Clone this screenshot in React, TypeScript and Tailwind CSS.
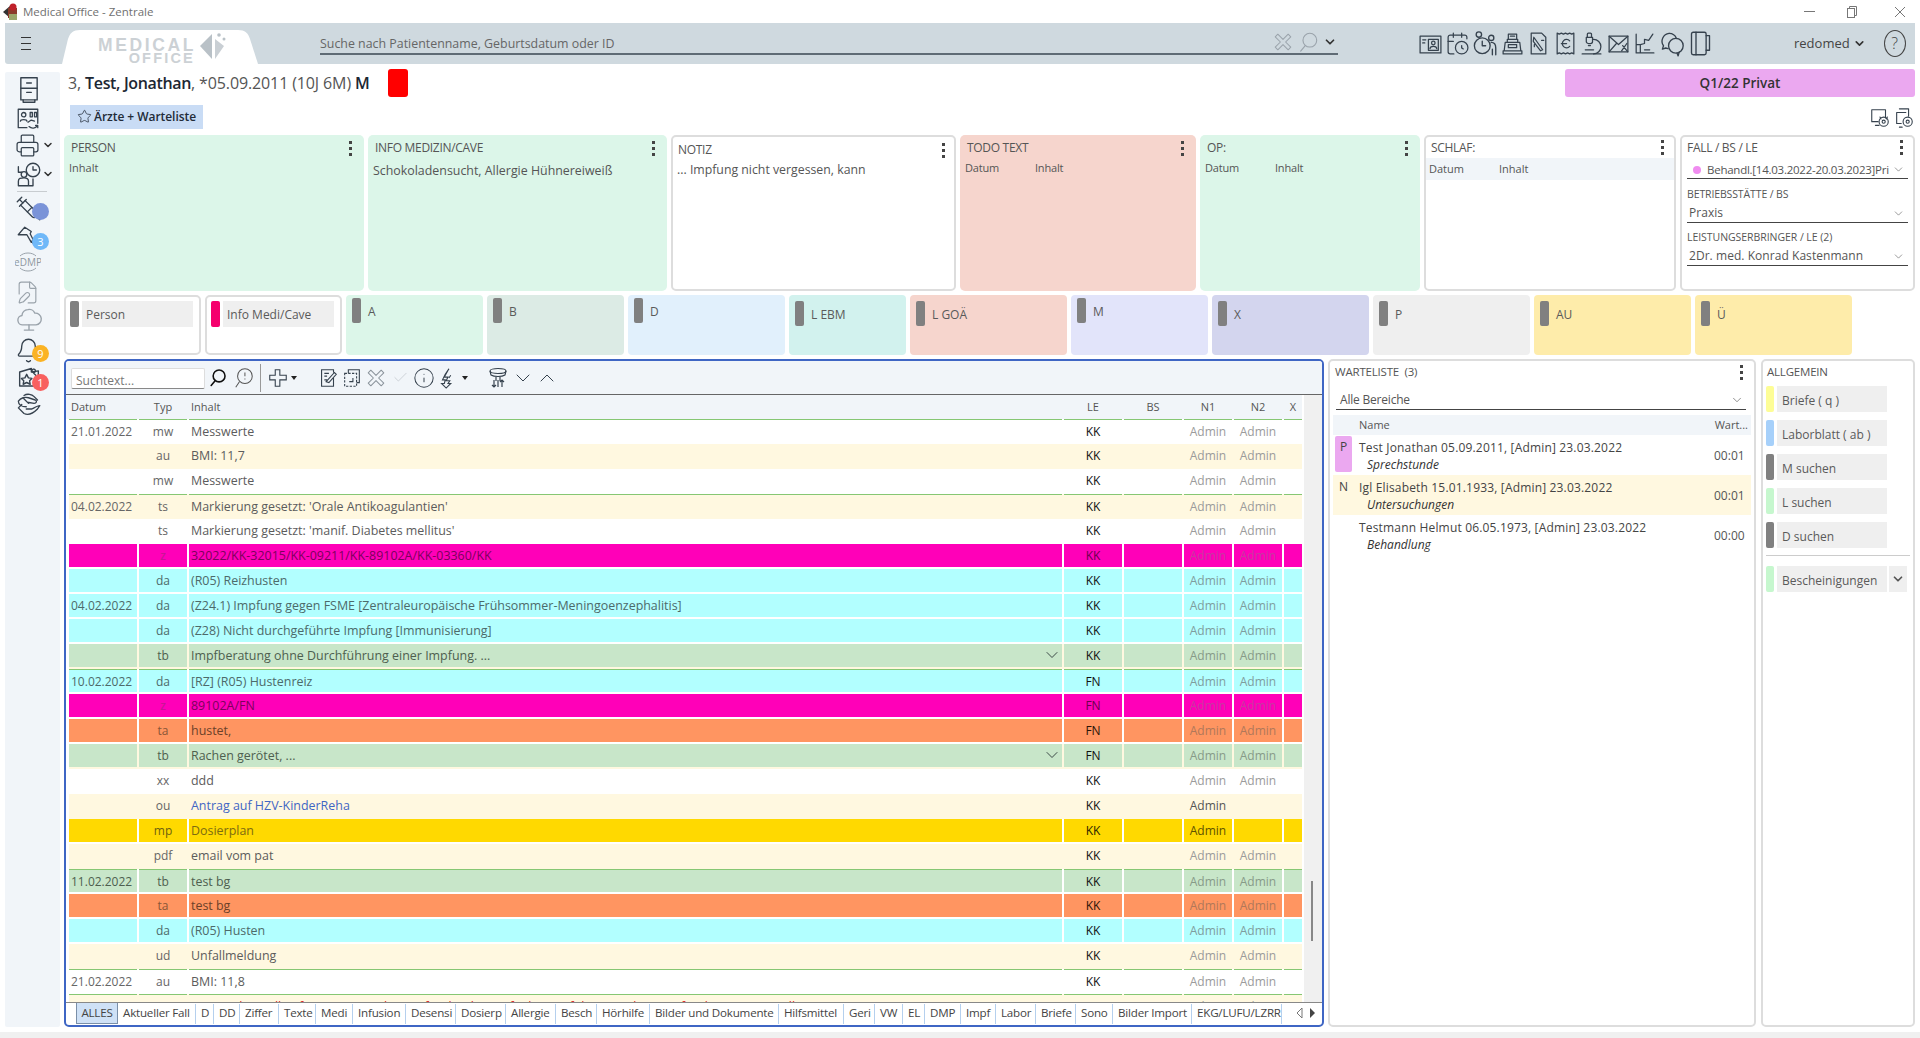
import React from "react";
import { ChevronDown, ChevronUp, Star, Bell, Printer, Syringe, FilePen, Microscope, ReceiptEuro, CalendarClock, Check, Info } from "lucide-react";

const sk = "#36424e";

function S({ size = 24, children, color = sk, w = 1.2, className = "" }: { size?: number; children: React.ReactNode; color?: string; w?: number; className?: string }) {
  return (
    <svg width={size} height={size} viewBox="0 0 24 24" fill="none" stroke={color} strokeWidth={w} strokeLinecap="round" strokeLinejoin="round" className={className}>
      {children}
    </svg>
  );
}

const Cabinet = () => (
  <S size={28}><rect x="5" y="1.5" width="14" height="19" /><path d="M5 10.5h14M10 6h4M10 14h4M7 20.5v2h10v-2" /></S>
);
const MapPeople = () => (
  <S size={26}><path d="M3 3h18v13M3 3v17h8" /><circle cx="8" cy="8" r="2" /><path d="M5 14c0-2 6-2 6 0M14 6h2v4h-2zM18 6h2v4h-2zM13 19c2 2 6 2 8-1M21 18l-2 0M21 18v2M12 15l3-2 3 1" /></S>
);
const PersonClock = () => (
  <S size={27}><circle cx="16" cy="8" r="6" /><path d="M16 5v3h3" /><circle cx="8" cy="12" r="2.5" /><path d="M3 22v-4c0-3 2-3 5-3s4 1 4 3v4zM3 5v5h3M16 16v6H11" /></S>
);
const PinIcon = () => (
  <S size={26}><path d="M9 2 3 9l8 0 4 7 2-2-3-6 1-2-6-4zM14 14l6 6" /></S>
);
const EDmp = () => (
  <svg width="26" height="26" viewBox="0 0 26 26" fill="none" stroke="#9aa3ab" strokeWidth="1">
    <path d="M5 7c4-4 12-4 16 0M5 19c4 4 12 4 16 0" />
    <text x="13" y="16.5" textAnchor="middle" fontSize="10" fill="#8f98a0" stroke="none" fontFamily="'Open Sans',sans-serif">eDMP</text>
  </svg>
);
const CloudNet = () => (
  <S size={28} color="#9aa3ab"><path d="M7 17a4 4 0 0 1-1-8 5 5 0 0 1 5-5 5 5 0 0 1 6 3 5 5 0 0 1 1 10z" /><path d="M12 17v4M8 21.5h8" /></S>
);
const StarMap = () => (
  <S size={28}><path d="M4 6 14 3v3l6-1v13H4z" /><path d="M10 8l1.5 3 3 .5-2 2 .5 3-3-1.5-3 1.5.5-3-2-2 3-.5zM15 6l3 3M16 3.5a1.5 1.5 0 1 0 .1 0" /></S>
);
const HandLeaf = () => (
  <S size={27}><path d="M3 9c2-3 6-4 9-3l6 2c2 1 1 3-1 3l-6-1M3 9c0 3 3 5 7 5M8 4c3-2 7-1 9 1l3 3M6 12l-3 3 5 5c4 2 8 0 12-4l2-3c-2 0-5 2-7 3h-5M7 6l5 5" /></S>
);
const ContactCard = () => (
  <S size={25}><rect x="2" y="5" width="20" height="16" /><path d="M4.5 8.5h3M4.5 11.5h2" /><rect x="10" y="8" width="9.5" height="10.5" /><circle cx="14.7" cy="11.5" r="1.7" /><path d="M11.5 17c0-3 6.5-3 6.5 0" /></S>
);
const UsersClock = () => (
  <S size={27}><circle cx="10" cy="14" r="7" /><path d="M10 10v4h3" /><circle cx="7" cy="4" r="2.4" /><circle cx="18" cy="7" r="2.3" /><path d="M18 11c3 0 4 2 4 5v6M19 22v-5" /></S>
);
const Register = () => (
  <S size={25}><path d="M3 22h18v-3H3zM4 19l1-8h14l1 8M7 11V8h10v3M8 8V3h8v5M10 5h4" /><rect x="8" y="13" width="8" height="3" /></S>
);
const DocTag = () => (
  <S size={25}><path d="M5 2h10l4 4v16H5z" /><path d="M7.5 6 16 18l-2 1-7-9zM8 13v2M15 9h2" /></S>
);
const EnvelopeArrow = () => (
  <S size={25}><rect x="3" y="5" width="18" height="15" /><path d="m3 5 9 8 9-8M3 20l7-8M21 20l-5-6M15 19l5-7" /></S>
);
const ChartUp = () => (
  <S size={25}><path d="M4 3v18h17M8 21v-8l4-1v-4l4 1 4-6M4 13h4M12 18h5" /></S>
);
const Bubbles = () => (
  <S size={27}><path d="M9 3a7 7 0 0 0-5 11l-1 3 3-1 2 .5" /><path d="M9 3a7 7 0 0 1 6.5 4.5" /><circle cx="15" cy="14" r="6.5" /><path d="m16 20.5 1 2.5 1-3.5" /></S>
);
const TabletDoc = () => (
  <S size={27}><rect x="4" y="2" width="13" height="20" rx="1.5" /><path d="M17 5h3v13h-3M8 2v20" /></S>
);
const MonGear = () => (
  <S size={22}><path d="M3 3h15v9M3 3v13h7M7 20h4" /><circle cx="16" cy="16" r="5" /><circle cx="16" cy="16" r="1.7" /><path d="M13 13l-1-2M19 13l1-2" /></S>
);
const DocGear = () => (
  <S size={22}><path d="M7 2h10v8M4 6h10M4 6v12h5M7 22h3" /><circle cx="16" cy="16" r="5" /><circle cx="16" cy="16" r="1.7" /></S>
);
const CrossOutline = ({ color = "#9aa3ab", size = 24 }: { color?: string; size?: number }) => (
  <S size={size} color={color} w={1.1}><path d="M10 2h4v8h8v4h-8v8h-4v-8H2v-4h8z" transform="rotate(45 12 12)" /></S>
);
const Lens = ({ color = "#9aa3ab", w = 1.2, size = 22 }: { color?: string; w?: number; size?: number }) => (
  <S size={size} color={color} w={w}><circle cx="14" cy="10" r="7.5" /><path d="M9 16l-5 6" /></S>
);

const Dots = () => (
  <div className="flex flex-col gap-[3px] w-[3px]">
    <div className="h-[3px] w-[3px] bg-[#444]" />
    <div className="h-[3px] w-[3px] bg-[#444]" />
    <div className="h-[3px] w-[3px] bg-[#444]" />
  </div>
);

function PanelHead({ title, bordered }: { title: string; bordered?: boolean }) {
  return (
    <div className={`flex h-[26px] items-center justify-between ${bordered ? "pl-[5px] pr-[9px]" : "pl-[7px] pr-[12px]"}`}>
      <span className="text-[12px] text-[#555] tracking-[-0.3px]">{title}</span>
      <Dots />
    </div>
  );
}

function InfoPanel({ title, w, bg, border, head, children }: { title: string; w: string; bg: string; border?: boolean; head?: boolean; children?: React.ReactNode }) {
  return (
    <div className={`${w} ${bg} ${border ? "border-2 border-[#ddd]" : ""} rounded-[5px] shrink-0 overflow-hidden`}>
      <PanelHead title={title} bordered={border} />
      {head && (
        <div className="flex h-[13px] items-center pl-[5px] pt-px text-[11px] text-[#555] tracking-[-0.2px]">
          <span className="w-[70px]">Datum</span><span>Inhalt</span>
        </div>
      )}
      {children}
    </div>
  );
}

function Tile({ label, w, bg, low }: { label: string; w: string; bg: string; low?: boolean }) {
  return (
    <div className={`${w} ${bg} h-[60px] rounded-[4px] flex items-start pl-[6px] ${low ? "pt-[6px]" : "pt-[3px]"} shrink-0`}>
      <div className="w-[9px] h-[25px] rounded-[2px] bg-[#808080]" />
      <span className="ml-[7px] text-[12px] leading-[28px] text-[#5a5a5a]">{label}</span>
    </div>
  );
}

function TileBox({ label, bar }: { label: string; bar: string }) {
  return (
    <div className="w-[137px] h-[60px] border-2 border-[#ddd] rounded-[5px] bg-white flex items-start pl-[4px] pt-[4px] shrink-0">
      <div className={`w-[9px] h-[26px] rounded-[2px] ${bar}`} />
      <div className="ml-[3px] w-[111px] h-[26px] bg-[#efefef] text-[12px] leading-[28px] pl-[4px] text-[#5a5a5a]">{label}</div>
    </div>
  );
}

type RowT = { d?: string; t: string; c: string; le?: string; n1?: boolean; n2?: boolean; kind?: string; top?: boolean; chev?: boolean; cream?: boolean; strong?: boolean; main?: string };

const K: Record<string, { bg: string; main: string; admin: string; typ: string; kk: string }> = {
  none: { bg: "", main: "text-[#5c5c5c]", admin: "text-[#9b9b9b]", typ: "text-[#666]", kk: "text-[#111]" },
  mag: { bg: "bg-[#ff00b8]", main: "text-[#7c005c]", admin: "text-[#c73aa1]", typ: "text-[#c01a8f]", kk: "text-[#6a004e]" },
  cy: { bg: "bg-[#b2ffff]", main: "text-[#4d6a6a]", admin: "text-[#7f9d9d]", typ: "text-[#4d6a6a]", kk: "text-[#111]" },
  gr: { bg: "bg-[#c8e6c9]", main: "text-[#4e5f4f]", admin: "text-[#879a88]", typ: "text-[#4e5f4f]", kk: "text-[#111]" },
  or: { bg: "bg-[#ff9561]", main: "text-[#6b4129]", admin: "text-[#b0785a]", typ: "text-[#8a5537]", kk: "text-[#2a1408]" },
  go: { bg: "bg-[#ffd900]", main: "text-[#7d6b10]", admin: "text-[#5e5200]", typ: "text-[#6d5f10]", kk: "text-[#2a2400]" },
};

const rows: RowT[] = [
  { d: "21.01.2022", t: "mw", c: "Messwerte", top: true },
  { t: "au", c: "BMI: 11,7", cream: true },
  { t: "mw", c: "Messwerte" },
  { d: "04.02.2022", t: "ts", c: "Markierung gesetzt: 'Orale Antikoagulantien'", top: true, cream: true },
  { t: "ts", c: "Markierung gesetzt: 'manif. Diabetes mellitus'" },
  { t: "z", c: "32022/KK-32015/KK-09211/KK-89102A/KK-03360/KK", kind: "mag" },
  { t: "da", c: "(R05) Reizhusten", kind: "cy" },
  { d: "04.02.2022", t: "da", c: "(Z24.1) Impfung gegen FSME [Zentraleuropäische Frühsommer-Meningoenzephalitis]", kind: "cy" },
  { t: "da", c: "(Z28) Nicht durchgeführte Impfung [Immunisierung]", kind: "cy" },
  { t: "tb", c: "Impfberatung ohne Durchführung einer Impfung. ...", kind: "gr", chev: true, cream: true },
  { d: "10.02.2022", t: "da", c: "[RZ] (R05) Hustenreiz", le: "FN", kind: "cy", top: true },
  { t: "z", c: "89102A/FN", le: "FN", kind: "mag" },
  { t: "ta", c: "hustet,", le: "FN", kind: "or" },
  { t: "tb", c: "Rachen gerötet, ...", le: "FN", kind: "gr", chev: true, cream: true },
  { t: "xx", c: "ddd" },
  { t: "ou", c: "Antrag auf HZV-KinderReha", cream: true, main: "text-[#3f66c4]", strong: true, n2: false },
  { t: "mp", c: "Dosierplan", kind: "go", n2: false },
  { t: "pdf", c: "email vom pat", cream: true },
  { d: "11.02.2022", t: "tb", c: "test bg", kind: "gr", top: true },
  { t: "ta", c: "test bg", kind: "or" },
  { t: "da", c: "(R05) Husten", kind: "cy" },
  { t: "ud", c: "Unfallmeldung", cream: true },
  { d: "21.02.2022", t: "au", c: "BMI: 11,8", top: true },
];

const partial: RowT = { d: "26.02.2022", t: "au", c: "Rö-Bericht: (Fall aufgenommen) ohne Befund, Schuttaufnahme erfolgt, Wunde Rö-Befund 2015 ist erstellt", cream: true, top: true, main: "text-[#d92020]" };

function Row({ r }: { r: RowT }) {
  const k = K[r.kind ?? "none"];
  const cell = `${k.bg} ${r.top ? "border-t border-[#86c773]" : ""} ${r.kind ? "h-[23px]" : "h-[25px]"} leading-[24px] mr-[2px] shrink-0 overflow-hidden whitespace-nowrap`;
  const admin = r.strong ? "text-[#555]" : k.admin;
  const n2 = r.n2 !== false;
  return (
    <div className={`flex h-[25px] text-[12px] ${r.cream ? "bg-[#fff8e0]" : "bg-white"}`}>
      <div className={`${cell} w-[68px] pl-[2px] ${r.kind ? k.typ : "text-[#666]"}`}>{r.d}</div>
      <div className={`${cell} w-[48px] text-center ${k.typ}`}>{r.t}</div>
      <div className={`${cell} w-[873px] pl-[2px] flex justify-between text-[12.45px] ${r.main ?? k.main}`}>
        <span>{r.c}</span>
        {r.chev && <ChevronDown size={20} strokeWidth={1.1} color="#2e3a3a" className="mt-[1px]" />}
      </div>
      <div className={`${cell} w-[58px] text-center ${k.kk}`}>{r.le ?? "KK"}</div>
      <div className={`${cell} w-[58px]`} />
      <div className={`${cell} w-[48px] text-center ${admin}`}>Admin</div>
      <div className={`${cell} w-[48px] text-center ${admin}`}>{n2 ? "Admin" : ""}</div>
      <div className={`${cell} w-[18px] mr-0`} />
    </div>
  );
}

const tabs: [string, string][] = [
  ["Aktueller Fall", "w-[78px]"], ["D", "w-[18px]"], ["DD", "w-[26px]"], ["Ziffer", "w-[39px]"], ["Texte", "w-[37px]"], ["Medi", "w-[37px]"],
  ["Infusion", "w-[53px]"], ["Desensi", "w-[50px]"], ["Dosierp", "w-[50px]"], ["Allergie", "w-[50px]"], ["Besch", "w-[41px]"], ["Hörhilfe", "w-[53px]"],
  ["Bilder und Dokumente", "w-[129px]"], ["Hilfsmittel", "w-[65px]"], ["Geri", "w-[31px]"], ["VW", "w-[28px]"], ["EL", "w-[22px]"], ["DMP", "w-[36px]"],
  ["Impf", "w-[35px]"], ["Labor", "w-[40px]"], ["Briefe", "w-[40px]"], ["Sono", "w-[37px]"], ["Bilder Import", "w-[79px]"], ["EKG/LUFU/LZRR", "w-[90px]"],
];

function Side({ cls, children, badge, bc }: { cls: string; children: React.ReactNode; badge?: string; bc?: string }) {
  return (
    <div className={`relative h-[28px] w-[55px] pl-[10px] flex items-center ${cls}`}>
      {children}
      {bc && (
        <span className={`absolute left-[27px] top-[9px] w-[17px] h-[17px] rounded-full ${bc} text-white text-[11px] leading-[17px] text-center`}>{badge}</span>
      )}
    </div>
  );
}

function Allg({ label, bar, extra }: { label: string; bar: string; extra?: boolean }) {
  return (
    <div className="flex h-[26px] ml-[3px] shrink-0">
      <div className={`w-[8px] rounded-[2px] ${bar}`} />
      <div className="ml-[3px] w-[110px] bg-[#efefef] text-[12px] leading-[29px] pl-[5px] text-[#5a5a5a] whitespace-nowrap">{label}</div>
      {extra && (
        <div className="ml-[2px] w-[18px] bg-[#efefef] flex items-center justify-center">
          <ChevronDown size={14} strokeWidth={3} color="#555" />
        </div>
      )}
    </div>
  );
}

function Wait({ badge, badgeBg, name, sub, time, cream }: { badge?: string; badgeBg?: string; name: string; sub: string; time: string; cream?: boolean }) {
  return (
    <div className={`flex h-[40px] mx-[3px] ${cream ? "bg-[#fff8e0]" : ""}`}>
      <div className={`w-[17px] ml-[2px] mt-[1px] h-[36px] rounded-[2px] text-center text-[12px] leading-[22px] text-[#444] ${badgeBg ?? ""}`}>{badge}</div>
      <div className="ml-[7px] flex-1 pt-[4px]">
        <div className="text-[12px] leading-[17px] text-[#444] whitespace-nowrap tracking-[0.17px]">{name}</div>
        <div className="text-[12px] leading-[17px] italic text-[#333] pl-[8px]">{sub}</div>
      </div>
      <div className="w-[37px] text-[12px] text-[#555] leading-[42px]">{time}</div>
    </div>
  );
}

function Sel({ text, dot, tall }: { text: string; dot?: boolean; tall?: boolean }) {
  return (
    <div className={`mx-[5px] ${tall ? "h-[21px] pt-[3px]" : "h-[19px]"} border-b border-[#444] flex items-center justify-between text-[11.5px] text-[#555] whitespace-nowrap`}>
      <div className="flex items-center overflow-hidden w-[203px]">
        {dot && <span className="ml-[6px] mr-[6px] w-[8px] h-[8px] rounded-full bg-[#f08cf0] shrink-0" />}
        <span className={dot ? "tracking-[-0.25px]" : "pl-[2px] text-[12px] tracking-[0.05px]"}>{text}</span>
      </div>
      <ChevronDown size={13} strokeWidth={1} color="#444" className="mr-[3px]" />
    </div>
  );
}

export default function App() {
  return (
    <div className="w-[1920px] h-[1038px] overflow-hidden bg-white font-['Open_Sans',sans-serif] flex flex-col">
      {/* title bar */}
      <div className="h-[23px] flex items-center shrink-0">
        <svg width="18" height="20" viewBox="0 0 18 20" className="ml-[2px]">
          <path d="M1 10 8 4v12z" fill="#333" />
          <path d="M6 6h9v10H6z" fill="#8a3a2a" />
          <circle cx="11" cy="5" r="3.5" fill="#c0202a" />
          <rect x="7" y="12" width="8" height="6" fill="#9aa66a" />
        </svg>
        <span className="ml-[3px] text-[11.5px] text-[#707070]">Medical Office - Zentrale</span>
        <div className="ml-auto flex items-center mr-[14px]">
          <div className="w-[11px] h-px bg-[#777] mr-[31px]" />
          <svg width="12" height="14" viewBox="0 0 12 14" fill="none" stroke="#777" className="mr-[36px]"><rect x="1.5" y="3.5" width="7" height="9" /><path d="M3.5 3.5v-2h7v9h-2" /></svg>
          <svg width="12" height="12" viewBox="0 0 12 12" fill="none" stroke="#777"><path d="M1 1l10 10M11 1 1 11" /></svg>
        </div>
      </div>
      {/* header */}
      <div className="h-[41px] mx-[5px] bg-[#cfd9df] flex shrink-0 rounded-bl-[3px]">
        <div className="w-[57px] flex flex-col justify-center items-start pl-[16px] gap-[5px]">
          <div className="w-[10px] h-px bg-[#333]" /><div className="w-[10px] h-px bg-[#333]" /><div className="w-[10px] h-px bg-[#333]" />
        </div>
        <div className="relative w-[196px] mt-[7px] h-[34px]">
          <svg width="196" height="34" viewBox="0 0 196 34" className="absolute left-0 top-0">
            <path d="M0 34 6 9C8 3 11 0 18 0H176C183 0 186 3 188 9L196 34Z" fill="#fff" />
          </svg>
          <div className="absolute left-[34px] top-[7px] w-[98px] text-right font-['Liberation_Sans',sans-serif] font-bold text-[#ccd1d5] leading-none">
            <div className="text-[17.5px] tracking-[2.6px] mr-[-2px]">MEDICAL</div>
            <div className="text-[14.5px] tracking-[2.2px] -mt-[4px] mr-[-1px]">OFFICE</div>
          </div>
          <svg width="30" height="30" viewBox="0 0 30 30" className="absolute left-[136px] top-[1px]">
            <path d="M14 3 2 15l12 13z" fill="#b9c1c7" />
            <path d="M17 8l9 7-9 13z" fill="#c9cfd4" />
            <circle cx="21" cy="4" r="1.8" fill="#b9c1c7" /><circle cx="26" cy="8" r="1.5" fill="#b9c1c7" />
            <path d="M15 3v25" stroke="#fff" strokeWidth="2" />
          </svg>
        </div>
        <div className="ml-[62px] w-[1018px] h-[25px] mt-[7px] border-b-2 border-[#5f6b75] flex items-center text-[12.4px] text-[#666] shrink-0">
          <span className="pt-[5px]">Suche nach Patientenname, Geburtsdatum oder ID</span>
          <div className="ml-auto flex items-center mr-[1px]">
            <CrossOutline size={22} />
            <span className="ml-[3px]"><Lens /></span>
            <span className="ml-[4px]"><ChevronDown size={14} strokeWidth={3} color="#333" /></span>
          </div>
        </div>
        <div className="ml-[80px] flex items-center h-[41px] gap-[1.5px] shrink-0">
          <ContactCard />
          <CalendarClock size={25} strokeWidth={1.2} color={sk} />
          <UsersClock />
          <Register />
          <DocTag />
          <ReceiptEuro size={25} strokeWidth={1.2} color={sk} />
          <Microscope size={25} strokeWidth={1.2} color={sk} />
          <EnvelopeArrow />
          <ChartUp />
          <Bubbles />
          <TabletDoc />
        </div>
        <div className="ml-[80px] flex items-center text-[13px] text-[#444] shrink-0">
          <span className="pt-[1px]">redomed</span>
          <ChevronDown size={13} strokeWidth={3} color="#333" className="ml-[3px]" />
          <div className="ml-[18px] w-[22px] h-[27px] rounded-[50%] border border-[#444] text-center text-[16px] leading-[24px] text-[#444] font-light">?</div>
        </div>
      </div>
      {/* body */}
      <div className="h-[968px] flex px-[5px] shrink-0">
        <div className="w-[55px] h-[955px] mt-[8px] bg-[#f1f5f9] shrink-0 rounded-[2px]">
          <Side cls="mt-[4px]"><Cabinet /></Side>
          <Side cls="mt-px"><MapPeople /></Side>
          <Side cls="-mt-[2px]"><Printer size={25} strokeWidth={1.2} color={sk} /><ChevronDown size={12} strokeWidth={3} color="#333" className="ml-[2px]" /></Side>
          <Side cls="mt-px"><PersonClock /><ChevronDown size={12} strokeWidth={3} color="#333" /></Side>
          <div className="mt-[3px] ml-[12px] w-[30px] h-px bg-[#c8ccd0]" />
          <Side cls="mt-[2px]" bc="bg-[#7a93d8]" badge=""><Syringe size={27} strokeWidth={1.2} color={sk} className="-scale-x-100" /></Side>
          <Side cls="mt-[2px]" bc="bg-[#6fb8f8]" badge="3"><PinIcon /></Side>
          <Side cls="-mt-[4px]"><EDmp /></Side>
          <Side cls="mt-[2px]"><FilePen size={25} strokeWidth={1.1} color="#9aa3ab" /></Side>
          <Side cls="-mt-[1px]"><CloudNet /></Side>
          <Side cls="mt-[3px]" bc="bg-[#fbb324]" badge="9"><Bell size={27} strokeWidth={1.2} color={sk} /></Side>
          <Side cls="mt-px" bc="bg-[#f8605f]" badge="1"><StarMap /></Side>
          <Side cls="-mt-[3px]"><HandLeaf /></Side>
        </div>
        <div className="w-[1851px] ml-[4px] pt-[5px] shrink-0">
          <div className="h-[28px] flex">
            <div className="ml-[4px] h-[28px] flex items-center text-[16px] text-[#555] tracking-[-0.12px] whitespace-nowrap w-[320px]">
              3,&nbsp;<b className="text-[#1d2733] font-semibold tracking-[-0.35px]">Test, Jonathan</b>, *05.09.2011 (10J 6M)&nbsp;<b className="text-[#1d2733] font-semibold">M</b>
            </div>
            <div className="w-[20px] h-[28px] rounded-[3px] bg-[#ff0000]" />
            <div className="ml-auto w-[350px] h-[28px] rounded-[3px] bg-[#eba8f0] flex items-center justify-center text-[13.5px] font-semibold text-[#333] pt-[1px]">Q1/22 Privat</div>
          </div>
          <div className="h-[24px] mt-[8px] flex items-start">
            <div className="ml-[6px] w-[133px] h-[24px] bg-[#c9dcf5] flex items-center pl-[7px] pb-[1px] text-[12px] font-semibold text-[#222b38] tracking-[-0.05px] whitespace-nowrap">
              <Star size={15} strokeWidth={1.2} color="#222b38" className="mr-[2px]" />Ärzte + Warteliste
            </div>
            <div className="ml-auto flex items-center gap-[2px] mt-[2px]"><MonGear /><DocGear /></div>
          </div>
          {/* info panels */}
          <div className="flex gap-[4px] h-[156px] mt-[6px]">
            <InfoPanel title="PERSON" w="w-[300px]" bg="bg-[#dcf6e9]">
              <div className="pl-[5px] text-[11px] leading-[13px] text-[#555]">Inhalt</div>
            </InfoPanel>
            <InfoPanel title="INFO MEDIZIN/CAVE" w="w-[299px]" bg="bg-[#dcf6e9]">
              <div className="pl-[5px] text-[12.4px] leading-[20px] text-[#555]">Schokoladensucht, Allergie Hühnereiweiß</div>
            </InfoPanel>
            <InfoPanel title="NOTIZ" w="w-[285px]" bg="bg-white" border>
              <div className="pl-[4px] text-[12.3px] leading-[20px] -mt-[3px] text-[#555]">... Impfung nicht vergessen, kann</div>
            </InfoPanel>
            <InfoPanel title="TODO TEXT" w="w-[236px]" bg="bg-[#f6d5cd]" head />
            <InfoPanel title="OP:" w="w-[220px]" bg="bg-[#dcf6e9]" head />
            <div className="w-[252px] border-2 border-[#ddd] rounded-[5px] overflow-hidden shrink-0">
              <div className="flex h-[21px] items-center justify-between pl-[5px] pr-[10px]">
                <span className="text-[12px] text-[#555] tracking-[-0.3px]">SCHLAF:</span><Dots />
              </div>
              <div className="h-[22px] bg-[#f1f5f9] flex items-center pl-[3px] text-[11px] text-[#555]">
                <span className="w-[70px]">Datum</span><span>Inhalt</span>
              </div>
            </div>
            <div className="w-[235px] border-2 border-[#ddd] rounded-[5px] overflow-hidden shrink-0">
              <div className="flex h-[21px] items-center justify-between pl-[5px] pr-[10px]">
                <span className="text-[12px] text-[#555] tracking-[-0.3px]">FALL / BS / LE</span><Dots />
              </div>
              <Sel text="Behandl.[14.03.2022-20.03.2023]Pri" dot tall />
              <div className="mt-[5px] pl-[5px] text-[10.5px] leading-[20px] text-[#555] tracking-[-0.12px]">BETRIEBSSTÄTTE / BS</div>
              <Sel text="Praxis" />
              <div className="mt-[4px] pl-[5px] text-[10.5px] leading-[20px] text-[#555] tracking-[-0.05px]">LEISTUNGSERBRINGER / LE (2)</div>
              <Sel text="2Dr. med. Konrad Kastenmann" />
            </div>
          </div>
          {/* tiles */}
          <div className="flex gap-[4px] mt-[4px] h-[60px]">
            <TileBox label="Person" bar="bg-[#808080]" />
            <TileBox label="Info Medi/Cave" bar="bg-[#f5006d]" />
            <Tile label="A" w="w-[137px]" bg="bg-[#dcf6e9]" />
            <Tile label="B" w="w-[137px]" bg="bg-[#dcebe5]" />
            <Tile label="D" w="w-[157px]" bg="bg-[#e1f0fc]" />
            <Tile label="L EBM" w="w-[117px]" bg="bg-[#d2f2ee]" low />
            <Tile label="L GOÄ" w="w-[157px]" bg="bg-[#f6d5cd]" low />
            <Tile label="M" w="w-[137px]" bg="bg-[#e2e4fa]" />
            <Tile label="X" w="w-[157px]" bg="bg-[#d3d5ee]" low />
            <Tile label="P" w="w-[157px]" bg="bg-[#efefef]" low />
            <Tile label="AU" w="w-[157px]" bg="bg-[#feecaa]" low />
            <Tile label="Ü" w="w-[157px]" bg="bg-[#feecaa]" low />
          </div>
          {/* bottom row */}
          <div className="flex mt-[4px] h-[668px]">
            <div className="w-[1260px] h-[668px] border-2 border-[#3f66c4] rounded-[5px] flex flex-col overflow-hidden shrink-0">
              <div className="h-[34px] bg-[#f1f5f9] border-b border-[#666] flex items-center shrink-0">
                <div className="ml-[5px] w-[134px] h-[21px] bg-white border border-[#ddd] border-b-[#888] rounded-[2px] text-[12px] leading-[23px] pl-[4px] text-[#777] mt-[1px]">Suchtext...</div>
                <span className="ml-[2px] w-[20px] flex justify-center"><Lens color="#111" w={2} size={19} /></span>
                <span className="ml-[5px] w-[24px] flex justify-center">
                  <svg width="22" height="22" viewBox="0 0 24 24" fill="none" stroke="#555" strokeWidth="1.1"><circle cx="13" cy="10" r="8" /><path d="M7 16l-4 6M13 6v4M13 12.5v1" /></svg>
                </span>
                <div className="ml-[4px] w-px h-[28px] bg-[#999]" />
                <span className="ml-[6px] w-[22px] flex justify-center">
                  <svg width="22" height="22" viewBox="0 0 24 24" fill="none" stroke="#36424e" strokeWidth="1.2"><path d="M9 3h5v6h7v5h-7v7H9v-7H3V9h6z" /></svg>
                </span>
                <span className="w-[10px] flex justify-center"><span className="border-x-[3px] border-t-[4px] border-x-transparent border-t-[#222]" /></span>
                <span className="ml-[17px] w-[24px] flex justify-center">
                  <svg width="22" height="22" viewBox="0 0 24 24" fill="none" stroke="#36424e" strokeWidth="1.2"><path d="M18 12v9H5V3h13v3M8 7h5M8 10h3M8 14h3M10 16l9-10 2 2-8 9z" /></svg>
                </span>
                <span className="w-[24px] flex justify-center">
                  <svg width="22" height="22" viewBox="0 0 24 24" fill="none" stroke="#36424e" strokeWidth="1.2"><rect x="4" y="7" width="13" height="14" strokeDasharray="2.5 1.5" /><path d="M8 7V3h12v14h-3M9 16h4v-4" /></svg>
                </span>
                <span className="w-[24px] flex justify-center"><CrossOutline color="#8a939b" size={22} /></span>
                <span className="w-[24px] flex justify-center"><Check size={17} strokeWidth={0.9} color="#b8bfc5" /></span>
                <span className="w-[24px] flex justify-center"><Info size={22} strokeWidth={1.1} color="#36424e" /></span>
                <span className="w-[24px] flex justify-center">
                  <svg width="22" height="24" viewBox="0 0 24 24" fill="none" stroke="#36424e" strokeWidth="1.2"><path d="M13 2 8 11h4l-2 4h4l-2 3h3l-5 5-5-5h3l1-4H6l3-6zM15 9l-2 3" /></svg>
                </span>
                <span className="w-[10px] flex justify-center"><span className="border-x-[3px] border-t-[4px] border-x-transparent border-t-[#222]" /></span>
                <span className="ml-[16px] w-[24px] flex justify-center">
                  <svg width="24" height="24" viewBox="0 0 24 24" fill="none" stroke="#36424e" strokeWidth="1.2"><ellipse cx="12" cy="5" rx="8" ry="2.5" /><path d="M4 5l1 4c3 2 11 2 14 0l1-4M10 10v5M14 10v5M8 14v7M6 19l2 2 2-2M12 14v7M16 21v-7M14 16l2-2 2 2" /></svg>
                </span>
                <span className="ml-px w-[24px] flex justify-center"><ChevronDown size={24} strokeWidth={1} color="#36424e" /></span>
                <span className="w-[24px] flex justify-center"><ChevronUp size={24} strokeWidth={1} color="#36424e" /></span>
              </div>
              <div className="flex h-[607px] shrink-0 overflow-hidden">
                <div className="w-[1236px] pl-[3px] shrink-0 overflow-hidden">
                  <div className="flex h-[24px] bg-[#f1f5f9] text-[11px] leading-[24px] text-[#555] -ml-[3px] pl-[3px]">
                    <div className="w-[68px] mr-[2px] pl-[2px]">Datum</div>
                    <div className="w-[48px] mr-[2px] text-center">Typ</div>
                    <div className="w-[873px] mr-[2px] pl-[2px]">Inhalt</div>
                    <div className="w-[58px] mr-[2px] text-center">LE</div>
                    <div className="w-[58px] mr-[2px] text-center">BS</div>
                    <div className="w-[48px] mr-[2px] text-center">N1</div>
                    <div className="w-[48px] mr-[2px] text-center">N2</div>
                    <div className="w-[18px] text-center">X</div>
                  </div>
                  {rows.map((r, i) => <Row key={i} r={r} />)}
                  <div className="h-[8px] overflow-hidden"><Row r={partial} /></div>
                </div>
                <div className="ml-[2px] w-[18px] bg-[#f0f0f0] shrink-0">
                  <div className="ml-[7px] mt-[486px] w-[2px] h-[60px] bg-[#888]" />
                </div>
              </div>
              <div className="flex-1 border-t border-[#888] flex items-start pl-[10px] text-[11.6px] text-[#444] tracking-[-0.2px] whitespace-nowrap">
                <div className="w-[42px] h-[21px] bg-[#cfe1f6] border border-[#7a8fa8] border-t-0 text-center leading-[19px] shrink-0">ALLES</div>
                {tabs.map(([t, w]) => (
                  <div key={t} className={`${w} h-[20px] mt-[1px] pl-[5px] border-r border-[#b5d0ee] leading-[17px] shrink-0`}>{t}</div>
                ))}
                <svg width="24" height="12" viewBox="0 0 24 12" className="ml-[14px] mt-[4px] shrink-0">
                  <path d="M6 1 1 6l5 5z" fill="none" stroke="#777" />
                  <path d="M14 1l5 5-5 5z" fill="#444" />
                </svg>
              </div>
            </div>
            <div className="ml-[4px] w-[428px] border-2 border-[#ddd] rounded-[5px] shrink-0">
              <div className="flex h-[22px] items-center justify-between pl-[5px] pr-[11px]">
                <span className="text-[11.5px] text-[#555] tracking-[-0.2px] whitespace-pre">WARTELISTE  (3)</span><Dots />
              </div>
              <div className="mx-[6px] w-[410px] mt-[6px] h-[21px] border-b border-[#444] flex items-center justify-between text-[12px] text-[#555] pl-[4px] pt-[1px]">
                <span className="tracking-[-0.2px]">Alle Bereiche</span>
                <ChevronDown size={14} strokeWidth={1} color="#444" className="mr-[2px]" />
              </div>
              <div className="mx-[3px] mt-[5px] h-[20px] bg-[#f1f5f9] flex items-center text-[11px] text-[#555]">
                <span className="ml-[26px]">Name</span><span className="ml-auto mr-[3px]">Wart...</span>
              </div>
              <Wait badge="P" badgeBg="bg-[#eba8f0]" name="Test Jonathan 05.09.2011, [Admin] 23.03.2022" sub="Sprechstunde" time="00:01" />
              <Wait badge="N" name="Igl Elisabeth 15.01.1933, [Admin] 23.03.2022" sub="Untersuchungen" time="00:01" cream />
              <Wait name="Testmann Helmut 06.05.1973, [Admin] 23.03.2022" sub="Behandlung" time="00:00" />
            </div>
            <div className="ml-[5px] w-[154px] border-2 border-[#ddd] rounded-[5px] shrink-0 flex flex-col">
              <div className="h-[25px] flex items-center pl-[4px] pb-[3px] text-[11.5px] text-[#555] tracking-[-0.2px]">ALLGEMEIN</div>
              <div className="flex flex-col gap-[8px]">
                <Allg label="Briefe ( q )" bar="bg-[#fdfd96]" />
                <Allg label="Laborblatt ( ab )" bar="bg-[#a6d0fa]" />
                <Allg label="M suchen" bar="bg-[#808080]" />
                <Allg label="L suchen" bar="bg-[#c6f7ce]" />
                <Allg label="D suchen" bar="bg-[#808080]" />
              </div>
              <div className="mt-[7px] mx-[3px] h-px bg-[#ccc]" />
              <div className="mt-[10px]"><Allg label="Bescheinigungen" bar="bg-[#c6f7ce]" extra /></div>
            </div>
          </div>
        </div>
      </div>
      <div className="flex-1 bg-[#f0f0f0]" />
    </div>
  );
}
